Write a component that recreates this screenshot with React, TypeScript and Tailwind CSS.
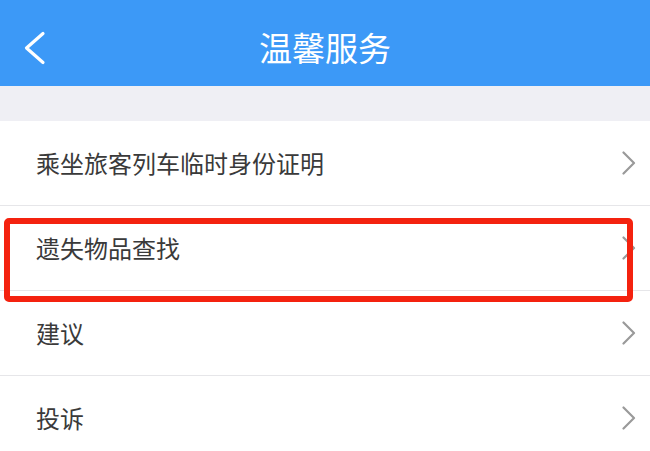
import React from "react";

const items = ["乘坐旅客列车临时身份证明", "遗失物品查找", "建议", "投诉"];

function Chevron() {
  return (
    <svg width="16" height="24" viewBox="0 0 16 24" className="shrink-0">
      <path d="M2.5 1.5 L13 12 L2.5 22.5" fill="none" stroke="#9a9a9a" strokeWidth="2.2" strokeLinecap="round" strokeLinejoin="round" />
    </svg>
  );
}

export default function App() {
  return (
    <div
      className="relative w-[650px] h-[451px] overflow-hidden bg-white"
      style={{ fontFamily: '"Noto Sans CJK SC", "Noto Sans", sans-serif' }}
    >
      <div className="h-[86px] bg-[#3c99f7] flex items-center relative">
        <svg width="24" height="34" viewBox="0 0 24 34" className="absolute left-[23px] top-[31px]">
          <path d="M20 2.5 L3.5 17 L20 31.5" fill="none" stroke="#ffffff" strokeWidth="3.2" strokeLinecap="round" strokeLinejoin="round" />
        </svg>
        <div className="flex-1 text-center text-white text-[33px] leading-none pt-[9px]">温馨服务</div>
      </div>
      <div className="h-[35px] bg-[#efeff4]" />
      <div className="flex flex-col">
        {items.map((t) => (
          <div key={t} className="h-[85px] border-b border-[#e6e6e9] flex items-center pl-[36px] pr-[13px]">
            <span className="flex-1 text-[24px] text-[#3a3a3a] leading-none">{t}</span>
            <Chevron />
          </div>
        ))}
      </div>
      <div className="absolute left-[4px] top-[218px] w-[629px] h-[84px] border-[6px] border-[#f4220f] rounded-[5px]" />
    </div>
  );
}
